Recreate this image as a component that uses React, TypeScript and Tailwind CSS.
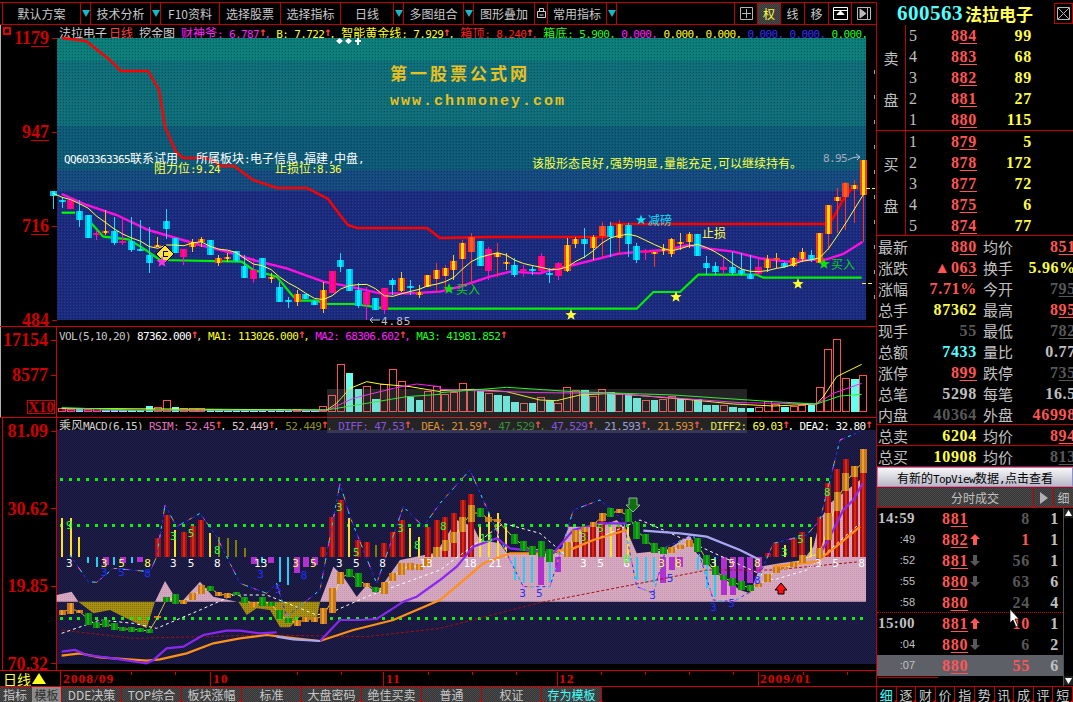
import type { ReactNode } from 'react';

const serif = "font-['Liberation_Serif',serif] font-bold";
const mono = "font-['DejaVu_Sans_Mono',monospace]";
const cjk = "font-['Noto_Sans_CJK_SC',sans-serif]";
const dither = 'bg-[repeating-conic-gradient(#4a4a4a_0_25%,#363636_0_50%)] bg-[length:2px_2px]';

type Pt = [number, number];

// zoom coordinates -> page coordinates
const conv = (list: Pt[], ox: number, oy: number) => list.map(([x, y]): Pt => [ox + x / 3, oy + y / 3]);
const z5 = (list: Pt[]) => conv(list, 0, 180);
const z6 = (list: Pt[]) => conv(list, 440, 180);
const z7 = (list: Pt[]) => conv(list, 0, 420);
const z8 = (list: Pt[]) => conv(list, 440, 420);
const str = (list: Pt[]) => list.map((p) => p.join(',')).join(' ');
const cx = (i: number) => 53.3 + 8.71 * i;

const star = (x: number, y: number, r: number) => {
  const out: string[] = [];
  for (let n = 0; n < 10; n++) {
    const rad = n % 2 === 0 ? r : r * 0.42;
    const a = -Math.PI / 2 + (n * Math.PI) / 5;
    out.push(`${x + rad * Math.cos(a)},${y + rad * Math.sin(a)}`);
  }
  return out.join(' ');
};

// wick top, body top, body bottom, wick bottom, kind (zoom y values, page y = 180 + v / 3)
type Candle = [number, number, number, number, 'c' | 'y' | 'm' | 'r'];
const candles: Candle[] = [
  [33, 33, 47, 88, 'c'], [50, 60, 67, 85, 'c'], [60, 60, 87, 87, 'm'], [60, 93, 120, 140, 'c'], [105, 105, 173, 173, 'c'],
  [150, 160, 165, 180, 'm'], [90, 152, 160, 165, 'y'], [110, 153, 188, 195, 'c'], [110, 183, 186, 195, 'm'], [110, 183, 210, 215, 'c'],
  [120, 207, 212, 212, 'c'], [140, 225, 248, 280, 'c'], [170, 195, 199, 200, 'y'], [88, 123, 148, 178, 'c'], [175, 175, 220, 220, 'c'],
  [207, 207, 232, 255, 'm'], [178, 185, 200, 215, 'y'], [172, 178, 187, 200, 'y'], [180, 180, 225, 225, 'c'], [225, 233, 248, 258, 'y'],
  [220, 232, 236, 245, 'y'], [213, 213, 243, 243, 'c'], [225, 258, 293, 295, 'c'], [235, 270, 297, 310, 'm'], [235, 235, 293, 293, 'c'],
  [280, 290, 295, 310, 'y'], [305, 320, 365, 365, 'c'], [350, 360, 365, 385, 'c'], [330, 342, 365, 378, 'y'], [342, 342, 357, 357, 'c'],
  [360, 363, 375, 375, 'c'], [305, 330, 387, 398, 'y'], [273, 273, 340, 340, 'm'], [220, 240, 262, 275, 'c'], [267, 267, 332, 332, 'c'],
  [310, 330, 378, 385, 'c'], [320, 335, 375, 420, 'm'], [353, 353, 390, 390, 'c'], [324, 324, 390, 403, 'm'], [295, 300, 315, 345, 'c'],
  [275, 295, 333, 335, 'y'], [300, 318, 325, 345, 'c'], [315, 335, 345, 355, 'y'], [285, 285, 322, 322, 'y'], [248, 270, 298, 340, 'y'],
  [255, 263, 288, 330, 'y'], [225, 243, 270, 300, 'y'], [180, 190, 237, 320, 'y'], [158, 172, 215, 310, 'r'], [183, 183, 258, 258, 'c'],
  [200, 207, 272, 300, 'm'], [190, 220, 230, 290, 'y'], [220, 246, 250, 270, 'y'], [235, 256, 285, 290, 'c'], [255, 268, 272, 290, 'm'],
  [255, 268, 272, 285, 'c'], [220, 228, 273, 280, 'm'], [265, 278, 283, 310, 'c'], [245, 250, 287, 300, 'm'], [175, 195, 273, 275, 'y'],
  [170, 178, 193, 205, 'y'], [145, 178, 193, 235, 'c'], [165, 172, 203, 240, 'y'], [125, 138, 168, 230, 'r'], [125, 138, 172, 230, 'c'],
  [120, 133, 173, 225, 'y'], [130, 135, 192, 230, 'c'], [190, 197, 240, 250, 'c'], [207, 210, 220, 240, 'm'], [210, 215, 220, 262, 'y'],
  [192, 208, 213, 225, 'y'], [175, 178, 222, 230, 'y'], [158, 185, 188, 210, 'y'], [155, 162, 187, 205, 'y'], [162, 162, 228, 228, 'c'],
  [228, 250, 263, 285, 'c'], [245, 258, 275, 285, 'c'], [230, 262, 270, 285, 'm'], [215, 262, 278, 285, 'c'], [220, 270, 283, 288, 'c'],
  [225, 283, 296, 296, 'c'], [235, 262, 282, 285, 'm'], [225, 238, 264, 275, 'y'], [220, 235, 240, 265, 'r'], [245, 250, 260, 265, 'c'],
  [230, 234, 258, 262, 'y'], [205, 216, 238, 245, 'y'], [210, 226, 240, 245, 'c'], [160, 160, 250, 250, 'y'], [75, 75, 162, 210, 'y'],
  [25, 52, 62, 160, 'y'], [5, 8, 52, 150, 'r'], [0, 15, 28, 130, 'y'], [-60, -60, 44, 185, 'y'],
];

const vol = [
  0, 3, 2, -3, 2, 3, -2, -2, -2, -2, -2, -6, 4, 11, -5, 3, 3, 3, -3, -3, -2, -2, -2, -2, -2, -2, -3, -2, 2, -2, -2, 5,
  16, 47, -39, -23, 25, -13, 27, 42, 30, -15, -12, 20, 25, 17, 19, 28, 22, -21, 18, -17, -16, -10, 8, -9, 14, -12, 8, 24, 21,
  -22, 15, 22, -20, 17, -17, -14, 11, -12, 12, 15, -14, 12, -13, -7, -7, 6, -5, -4, -4, 4, 10, 7, -5, 5, 6, -7, 24, 62, 72, 33, -33, 36,
];

// macd columns: zoom y of the tip (page y = 420 + v / 3), zero line at 410
const macd: [number, string][] = [
  [295, 'y'], [295, 'y'], [350, 'y'], [430, 'c'], [440, 'c'], [435, 'm'], [435, 'c'], [430, 'm'], [430, 'c'], [425, 'm'], [410, 'c'],
  [355, 'r'], [285, 'r'], [330, 'y'], [335, 'r'], [318, 'r'], [300, 'r'], [338, 'y'], [350, 'o'], [355, 'o'], [360, 'o'], [385, 'o'],
  [432, 'm'], [430, 'c'], [430, 'm'], [485, 'c'], [495, 'c'], [460, 'm'], [440, 'm'], [435, 'm'], [380, 'r'], [290, 'r'], [240, 'r'],
  [293, 'y'], [360, 'r'], [365, 'r'], [375, 'o'], [370, 'r'], [335, 'r'], [300, 'r'], [323, 'y'], [350, 'y'], [320, 'r'], [300, 'r'],
  [290, 'r'], [280, 'r'], [240, 'r'], [222, 'r'], [320, 'y'], [280, 'y'], [280, 'y'], [320, 'y'], [480, 'c'], [490, 'c'], [490, 'c'],
  [495, 'm'], [490, 'c'], [455, 'm'], [370, 'r'], [350, 'r'], [330, 'r'], [320, 'r'], [300, 'r'], [320, 'y'], [320, 'r'], [320, 'y'],
  [480, 'c'], [490, 'c'], [490, 'c'], [490, 'm'], [450, 'm'], [440, 'm'], [410, 'r'], [450, 'c'], [505, 'c'], [530, 'c'], [525, 'm'],
  [525, 'm'], [500, 'm'], [490, 'm'], [460, 'm'], [400, 'r'], [365, 'r'], [375, 'y'], [355, 'r'], [335, 'r'], [350, 'y'], [292, 'r'],
  [190, 'r'], [148, 'r'], [118, 'r'], [155, 'r'], [88, 'r'],
];

const macdCandles: ([number, number, 'o' | 'g'] | null)[] = [
  [570, 585, 'o'], [550, 583, 'o'], [570, 578, 'o'], [580, 615, 'g'], [605, 625, 'g'], [600, 622, 'g'], [610, 630, 'g'], [620, 632, 'g'],
  [620, 637, 'g'], [623, 635, 'g'], [628, 640, 'g'], [588, 594, 'o'], [530, 545, 'g'], [522, 552, 'g'], [540, 552, 'o'], [518, 540, 'o'],
  [495, 522, 'o'], [498, 512, 'g'], [515, 528, 'o'], [518, 535, 'o'], [515, 525, 'g'], [530, 550, 'g'], [545, 560, 'o'], [530, 558, 'g'],
  [545, 557, 'g'], [570, 597, 'g'], [595, 610, 'g'], [600, 617, 'o'], [590, 605, 'o'], [590, 605, 'o'], [563, 612, 'o'], [503, 580, 'o'],
  [457, 492, 'o'], [447, 472, 'g'], [460, 500, 'g'], [490, 500, 'o'], [500, 515, 'g'], [487, 522, 'o'], [460, 482, 'o'], [430, 465, 'o'],
  [428, 450, 'o'], [432, 450, 'o'], [415, 437, 'o'], [380, 410, 'o'], [360, 392, 'o'], [335, 370, 'o'], [290, 335, 'o'], [255, 305, 'o'],
  [265, 292, 'g'], [290, 305, 'o'], [297, 307, 'o'], null, [343, 372, 'g'], [362, 392, 'g'], [378, 405, 'g'], [362, 410, 'g'], [388, 425, 'g'],
  null, [365, 410, 'o'], [330, 365, 'o'], [320, 335, 'o'], [305, 322, 'o'], [280, 302, 'o'], [265, 290, 'g'], [268, 280, 'o'], [268, 305, 'g'],
  [305, 358, 'g'], [342, 372, 'g'], [370, 398, 'g'], [382, 402, 'g'], [382, 398, 'o'], [375, 388, 'o'], [360, 380, 'o'], [355, 395, 'g'],
  [405, 435, 'g'], [438, 465, 'g'], [465, 480, 'g'], [475, 498, 'g'], [482, 510, 'g'], [495, 512, 'g'], [490, 500, 'o'], [462, 487, 'o'],
  [442, 458, 'o'], [440, 448, 'o'], [427, 442, 'o'], [405, 430, 'o'], null, [385, 415, 'o'], [278, 360, 'o'], [215, 273, 'o'], [160, 212, 'o'],
  [138, 170, 'o'], [88, 160, 'o'],
];

const redLine: Pt[] = [
  [62, 38], [86, 41], [110, 60], [121, 71], [148, 71], [159, 90], [165, 127], [176, 152], [183, 158], [207, 158], [221, 166], [234, 166],
  [253, 180], [277, 188], [307, 188], [328, 199], [340, 215], [348, 225], [357, 228], [427, 228], [440, 238], [488, 237], [607, 237], [612, 224],
  [827, 224], [832, 220], [843, 200], [853, 187],
];
const magentaLine: Pt[] = [
  ...z5([[185, 42], [260, 75], [350, 105], [445, 150], [600, 195], [680, 215], [760, 240], [860, 265], [970, 305], [1050, 320], [1140, 340], [1230, 340], [1320, 335]]),
  ...z6([[60, 320], [150, 290], [210, 275], [300, 280], [350, 265], [400, 255], [480, 235], [530, 222], [600, 215], [680, 210], [745, 195], [800, 205], [880, 215], [960, 235], [1040, 245], [1100, 240], [1160, 238], [1210, 222], [1268, 185]]),
];
const greenLine: Pt[] = [
  ...z5([[270, 125], [310, 170], [385, 178], [430, 205], [480, 240], [725, 245], [760, 270], [830, 290], [880, 350], [900, 362], [950, 362], [980, 372], [1060, 372], [1160, 386], [1320, 386]]),
  ...z6([[590, 386], [640, 336], [720, 336], [775, 284], [950, 284], [970, 293], [1265, 293]]),
];
const maLine: Pt[] = candles.map((_, i) => {
  const part = candles.slice(Math.max(0, i - 4), i + 1);
  const avg = part.reduce((s, c) => s + (c[1] + c[2]) / 2, 0) / part.length;
  return [cx(i), 180 + avg / 3];
});

const volYellow = [...z5([[185, 685], [980, 690], [1010, 670], [1050, 625], [1100, 605], [1140, 612], [1230, 620], [1320, 635]]), ...z6([[0, 632], [100, 628], [200, 635], [300, 660], [350, 662], [420, 645], [520, 640], [640, 650], [760, 660], [880, 672], [1000, 678], [1130, 672], [1150, 650], [1190, 590], [1265, 553]])];
const volMagenta = [...z5([[185, 690], [980, 692], [1060, 655], [1180, 625], [1250, 612], [1320, 620]]), ...z6([[0, 628], [100, 632], [300, 638], [500, 640], [650, 650], [900, 668], [1130, 672], [1180, 640], [1265, 610]])];
const volGreen = [...z5([[185, 683], [400, 690], [980, 690], [1100, 670], [1220, 650], [1320, 643]]), ...z6([[0, 638], [200, 622], [400, 635], [700, 645], [1000, 665], [1130, 672], [1200, 648], [1265, 643]])];

const purple1 = z7([[185, 695], [225, 690], [260, 705], [340, 715], [440, 730], [460, 720], [500, 685], [550, 680], [610, 645], [680, 632], [720, 632], [780, 640], [830, 637]]);
const paleBlue1 = z7([[830, 650], [880, 658], [960, 663]]);
const purple2 = [...z7([[960, 663], [1020, 600], [1080, 600], [1130, 597], [1210, 545], [1250, 530], [1320, 480]]), ...z8([[50, 440], [100, 380], [170, 355], [210, 385], [300, 395], [340, 400], [400, 330], [480, 310], [560, 310]])];
const paleBlue2 = z8([[610, 332], [720, 340], [800, 350], [900, 390], [960, 420]]);
const purple3 = z8([[1130, 420], [1180, 330], [1210, 270], [1240, 240], [1268, 190]]);
const orange1 = [...z7([[185, 707], [240, 700], [300, 712], [440, 722], [480, 718], [560, 700], [640, 670], [720, 655], [800, 645], [860, 652], [960, 663], [1060, 630], [1180, 600], [1320, 540]]), ...z8([[60, 490], [130, 430], [210, 400], [300, 400], [400, 385], [460, 360], [560, 330]])];
const orange2 = z8([[1000, 440], [1130, 425], [1200, 370], [1260, 320]]);
const darkRed = [...z7([[185, 630], [400, 655], [800, 645], [1100, 650], [1320, 625]]), ...z8([[300, 548], [600, 490], [800, 450], [1000, 450], [1260, 425]])];
const whiteDash = [...z7([[185, 640], [300, 600], [400, 610], [470, 625], [600, 570], [700, 525], [800, 525], [950, 585], [1010, 570], [1100, 530], [1320, 450]]), ...z8([[190, 310], [300, 340], [370, 400], [600, 300], [670, 330], [1000, 480], [1100, 450], [1260, 310]])];
const osc = [...z7([[210, 405], [265, 485], [290, 487], [340, 445], [450, 455], [470, 410], [495, 255], [530, 320], [600, 280], [650, 350], [720, 490], [800, 520], [830, 490], [860, 590], [960, 510], [1020, 190], [1050, 290], [1130, 490], [1210, 260], [1270, 320], [1320, 250]]), ...z8([[90, 150], [200, 400], [250, 500], [330, 500], [400, 270], [480, 240], [550, 300], [590, 500], [640, 520], [680, 380], [760, 345], [820, 540], [880, 545], [940, 510], [1000, 370], [1100, 345], [1140, 300], [1200, 60], [1260, 35]])];

const pink = [
  z7([[170, 545], [170, 525], [215, 515], [235, 545]]),
  z7([[465, 545], [495, 483], [530, 540], [545, 545], [600, 485], [640, 530], [710, 545]]),
  [...z7([[960, 545], [1000, 440], [1030, 470], [1070, 530], [1100, 495], [1130, 520], [1200, 420], [1300, 400], [1320, 380]]), ...z8([[50, 300], [100, 320], [120, 360], [180, 370], [200, 400], [360, 400], [385, 320], [480, 320], [530, 300], [560, 330], [590, 400], [680, 390], [750, 345], [770, 400], [830, 460], [900, 510], [930, 520], [960, 440], [1020, 430], [1090, 420], [1120, 380], [1140, 300], [1170, 250], [1260, 180], [1278, 180], [1278, 545]])],
];
const olive = [
  z7([[235, 545], [280, 580], [330, 570], [370, 590], [440, 625], [465, 545]]),
  z7([[715, 545], [740, 585], [770, 565], [810, 570], [840, 622], [870, 622], [900, 590], [950, 600], [960, 545]]),
];

// [zoom x, zoom y, text, colour], zoom 7 coordinates
const macdNums: [number, number, string, string][] = [
  [208, 430, '3', '#fff'], [312, 430, '3', '#ffff40'], [365, 430, '5', '#ffff40'], [443, 430, '8', '#ffff40'], [520, 430, '3', '#fff'], [573, 430, '5', '#fff'], [652, 430, '8', '#fff'], [782, 430, '13', '#fff'], [887, 430, '3', '#ffff40'], [940, 430, '5', '#ffff40'], [1018, 430, '3', '#fff'], [1069, 430, '5', '#fff'], [1148, 430, '8', '#fff'], [1278, 430, '13', '#fff'],
  [1410, 430, '18', '#fff'], [1485, 430, '21', '#fff'], [1750, 430, '3', '#fff'], [1802, 430, '5', '#fff'], [1880, 430, '8', '#fff'], [1985, 430, '3', '#ffff40'], [2035, 430, '8', '#ffff40'], [2140, 430, '3', '#ffff40'], [2195, 430, '5', '#ffff40'], [2272, 430, '8', '#ffff40'], [2455, 430, '3', '#fff'], [2507, 430, '5', '#fff'], [2585, 430, '8', '#fff'],
  [208, 315, '9', '#30ff30'], [520, 348, '3', '#30ff30'], [573, 338, '5', '#30ff30'], [652, 390, '8', '#30ff30'], [1018, 262, '3', '#30ff30'], [1069, 395, '5', '#30ff30'], [1202, 325, '3', '#30ff30'], [1252, 375, '8', '#30ff30'], [1330, 317, '8', '#30ff30'], [1458, 355, '13', '#30ff30'], [1750, 350, '3', '#30ff30'], [1802, 323, '5', '#30ff30'], [1880, 417, '8', '#30ff30'], [2353, 397, '3', '#30ff30'], [2402, 357, '5', '#30ff30'], [2482, 215, '8', '#30ff30'],
  [312, 455, '3', '#2030ff'], [365, 455, '5', '#2030ff'], [443, 458, '8', '#2030ff'], [782, 463, '3', '#2030ff'], [835, 508, '5', '#2030ff'], [912, 465, '8', '#2030ff'], [1568, 520, '3', '#2030ff'], [1618, 518, '5', '#2030ff'], [1958, 526, '3', '#2030ff'], [2010, 473, '5', '#2030ff'], [2140, 560, '3', '#2030ff'], [2195, 548, '5', '#2030ff'], [2272, 480, '8', '#2030ff'],
];

function Price({ v, className = '' }: { v: string; className?: string }) {
  return (
    <span className={className}>
      {v.slice(0, -2)}
      <u className="underline-offset-2">{v.slice(-2)}</u>
    </span>
  );
}

// ascii in a 6px cell, chinese in a 12px cell, as on the old terminal
function Mixed({ text, color }: { text: string; color: string }) {
  return (
    <span style={{ color }}>
      {text.split(/([\u4e00-\u9fff]+)/).map((part, i) =>
        i % 2 === 1 ? (
          <span key={i} className={`${cjk} text-[12px]`}>{part}</span>
        ) : (
          <span key={i} className={`${mono} text-[11px] tracking-[-0.62px]`}>{part}</span>
        )
      )}
    </span>
  );
}

function Legend({ items, className = '' }: { items: [string, string][]; className?: string }) {
  return (
    <div className={`flex items-center whitespace-pre pl-[2px] leading-none ${className}`}>
      {items.map(([t, c], i) =>
        t === '|' ? (
          <span key={i} className="w-[2px]" />
        ) : t === '↑' ? (
          <span key={i} className={`${mono} w-[5px] text-[12px] font-bold leading-none text-[#ff4040]`}>↑</span>
        ) : (
          <Mixed key={i} text={t} color={c} />
        )
      )}
    </div>
  );
}

function ChartText({ x, y, text, fill }: { x: number; y: number; text: string; fill: string }) {
  return (
    <text x={x} y={y} fill={fill}>
      {text.split(/([\u4e00-\u9fff\uff0c\u3002]+)/).map((part, i) =>
        i % 2 === 1 ? (
          <tspan key={i} className={cjk} fontSize="12">{part}</tspan>
        ) : (
          <tspan key={i} className={mono} fontSize="11" letterSpacing="-0.62">{part}</tspan>
        )
      )}
    </text>
  );
}

function AxisLabel({ children, tick = true }: { children: ReactNode; tick?: boolean }) {
  return (
    <div className={`flex h-[12px] items-center justify-end gap-[3px] text-[18px] leading-[12px] text-[#d00000] ${serif}`}>
      <span>{children}</span>
      {tick ? <span className="h-px w-[5px] bg-[#d00000]" /> : <span className="w-[5px]" />}
    </div>
  );
}

function DropArrow() {
  return (
    <span className="ml-auto flex h-full w-[10px] items-center justify-end border-l border-[#c00000]">
      <svg width="8" height="7" viewBox="0 0 8 7"><polygon points="0,0 8,0 4,7" fill="#18b8c8" /></svg>
    </span>
  );
}

const menu: [string, string, boolean][] = [
  ['默认方案', 'w-[88px]', true],
  ['技术分析', 'w-[70px]', true],
  ['F10资料', 'w-[59px]', false],
  ['选择股票', 'w-[61px]', false],
  ['选择指标', 'w-[60px]', false],
  ['日线', 'w-[63px]', true],
  ['多图组合', 'w-[70px]', true],
  ['图形叠加', 'w-[61px]', false],
];

function TopBar() {
  return (
    <div className="flex h-[25px] bg-black pt-[2px]">
      <div className={`flex h-[23px] w-[876px] items-center border-y border-[#c00000] pl-[2px] text-[12px] text-[#c8c8c8] ${cjk}`}>
        {menu.map(([label, w, drop]) => (
          <div key={label} className={`flex h-full items-center border-l border-[#c00000] ${w}`}>
            <span className="flex-1 text-center">{label}</span>
            {drop && <DropArrow />}
          </div>
        ))}
        <div className="flex h-full w-[13px] items-center justify-center border-l border-[#c00000]">
          <svg width="9" height="13" viewBox="0 0 9 13" fill="none" stroke="#d0d0d0">
            <path d="M2.5 4V1.5h4V4M.5 4.5h8v6h-8zM2.5 8h4" />
          </svg>
        </div>
        <div className="flex h-full w-[69px] items-center border-l border-[#c00000]">
          <span className="flex-1 text-center">常用指标</span>
          <DropArrow />
        </div>
        <div className="h-full w-[119px] border-x border-[#c00000]" />
        <div className="flex h-full w-[23px] items-center justify-center border-r border-[#c00000]">
          <svg width="13" height="13" viewBox="0 0 13 13" fill="none" stroke="#b8b8b8"><path d="M.5.5h12v12H.5zM6.5 2v9M2 6.5h9" /></svg>
        </div>
        <div className={`flex h-full w-[23px] items-center justify-center border-r border-[#c00000] text-[#ffff40] ${dither}`}>权</div>
        <div className="flex h-full w-[24px] items-center justify-center border-r border-[#c00000]">线</div>
        <div className="flex h-full w-[24px] items-center justify-center border-r border-[#c00000]">移</div>
        <div className="flex h-full w-[23px] items-center justify-center border-r border-[#c00000]">
          <svg width="15" height="13" viewBox="0 0 15 13" fill="none" stroke="#fff"><path d="M.5.5h14v12H.5zM.5 3.5h14" /><polygon points="7.5,4 11,7.5 4,7.5" fill="#fff" /></svg>
        </div>
        <div className="flex h-full flex-1 items-center justify-center">
          <svg width="14" height="13" viewBox="0 0 14 13" fill="none" stroke="#b8b8b8"><path d="M.5.5h13v12H.5zM10.5.5v12" /><polygon points="3,2 9,6.5 3,11" fill="#b8b8b8" /></svg>
        </div>
      </div>
      <div className="flex h-[23px] flex-1 items-center border-l border-[#c00000] pl-[20px]">
        <span className={`text-[21px] leading-none tracking-[0.5px] text-[#55ffff] ${serif}`}>600563</span>
        <span className={`ml-[2px] text-[17px] font-bold leading-none text-[#ffff55] ${cjk}`}>法拉电子</span>
        <span className="ml-auto flex h-[21px] w-[19px] items-center justify-center border border-[#c00000]">
          <svg width="13" height="13" viewBox="0 0 13 13" fill="none" stroke="#b8b8b8"><path d="M.5.5h12v12H.5zM1 1l11 11M12 1 1 12" /></svg>
        </span>
      </div>
    </div>
  );
}

function MainChart() {
  return (
    <svg viewBox="57 38 819 288" className="block h-[288px] w-[819px] overflow-visible" shapeRendering="crispEdges">
      <defs>
        <pattern id="dots" width="3" height="3" patternUnits="userSpaceOnUse">
          <rect width="1" height="1" fill="#000" opacity="0.25" />
          <rect x="1" y="2" width="1" height="1" fill="#fff" opacity="0.07" />
        </pattern>
      </defs>
      <rect x="57" y="38" width="809" height="23" fill="#0b7d78" />
      <rect x="57" y="61" width="809" height="65" fill="#0d6d78" />
      <rect x="57" y="126" width="809" height="44" fill="#0c5a78" />
      <rect x="57" y="170" width="809" height="21" fill="#144a80" />
      <rect x="57" y="191" width="809" height="129" fill="#1b2b80" />
      <rect x="57" y="38" width="809" height="282" fill="url(#dots)" />
      <g shapeRendering="geometricPrecision">
        <polyline points={str(redLine)} fill="none" stroke="#ff0000" strokeWidth="2.4" />
        <polyline points={str(z5([[185, 98], [225, 98]]))} fill="none" stroke="#00ff00" strokeWidth="2.2" />
        <polyline points={str(greenLine)} fill="none" stroke="#00f000" strokeWidth="2.2" />
        <polyline points={str(magentaLine)} fill="none" stroke="#ff10e0" strokeWidth="2.4" />
      </g>
      {candles.map(([wt, bt, bb, wb, k], i) => {
        const x = cx(i);
        const long = wb - bb > 40 && k !== 'c';
        const wick = k === 'c' ? '#20d8f0' : k === 'm' ? '#ff10c0' : long ? '#ff3020' : '#ffc020';
        const outer = k === 'c' ? '#00b8f0' : k === 'm' ? '#ff1040' : '#ff3820';
        const inner = k === 'c' ? '#00f0ff' : k === 'm' ? '#ff00d0' : k === 'y' ? '#ffe000' : '#f06020';
        const top = 180 + bt / 3;
        const h = Math.max(2, (bb - bt) / 3);
        return (
          <g key={i}>
            <line x1={x} x2={x} y1={180 + wt / 3} y2={180 + wb / 3} stroke={wick} />
            <rect x={x - 3.5} y={top} width={7} height={h} fill={outer} />
            <rect x={x - 1.5} y={top} width={3} height={h} fill={inner} />
          </g>
        );
      })}
      <polyline points={str(maLine)} fill="none" stroke="#ffff40" strokeWidth="1" shapeRendering="geometricPrecision" />

      <polygon points="165,245 174,254 165,263 156,254" fill="#ffe040" stroke="#000" />
      <path d="M168 251.5h-5v5h5" fill="none" stroke="#000" />
      <g shapeRendering="geometricPrecision">
        <polygon points={star(162, 262, 6)} fill="#ff30e0" />
        <polygon points={star(449, 289, 6)} fill="#10e010" />
        <polygon points={star(824, 264, 6)} fill="#10e010" />
        <polygon points={star(571, 315, 6)} fill="#ffff30" />
        <polygon points={star(676, 297, 6)} fill="#ffff30" />
        <polygon points={star(798, 284, 6)} fill="#ffff30" />
        <polygon points={star(641, 220, 5.5)} fill="#10e0f0" />
        <polygon points="336,41 339.5,38 343,41 339.5,44" fill="#fff" />
        <polygon points="345,41 348.5,38 352,41 348.5,44" fill="#fff" />
        <path d="M358 38v7M355 41h6" stroke="#fff" strokeWidth="2" />
      </g>
      <g shapeRendering="auto">
        <text x={390} y={80} fontSize="17" fontWeight="700" fill="#e8c020" className={cjk} letterSpacing="3">第一股票公式网</text>
        <text x={390} y={105} fontSize="15" fontWeight="700" fill="#e8c020" className="font-['Liberation_Mono',monospace]" letterSpacing="2">www.chnmoney.com</text>
        <ChartText x={64} y={163} text="QQ603363365联系试用" fill="#fff" />
        <ChartText x={196} y={163} text="所属板块:电子信息,福建,中盘," fill="#fff" />
        <ChartText x={154} y={173} text="阻力位:9.24" fill="#ffff40" />
        <ChartText x={275} y={173} text="止损位:8.36" fill="#ffff40" />
        <ChartText x={532} y={168} text="该股形态良好,强势明显,量能充足,可以继续持有。" fill="#ffff40" />
        <ChartText x={823} y={162} text="8.95" fill="#a8a8c0" />
        <path d="M848 160c3-2 7-3 11-3M856 154l4 3-3 3" fill="none" stroke="#c0c0d0" />
        <ChartText x={648} y={225} text="减磅" fill="#10e0f0" />
        <ChartText x={702} y={238} text="止损" fill="#ffff40" />
        <ChartText x={456} y={294} text="买入" fill="#10d010" />
        <ChartText x={831} y={269} text="买入" fill="#10d010" />
        <path d="M370 320h10M373 317l-3 3 3 3" fill="none" stroke="#c0c0d0" />
        <text x={381} y={325} fontSize="11" fill="#c0c0d0" className={mono} letterSpacing="1">4.85</text>
      </g>
      <path d="M866 188h9M862 283h12" stroke="#ffff40" strokeDasharray="4 2" />
      <path d="M874 70v4M874 95v4M874 120v4M874 145v4M874 170v4M874 195v4M874 220v4M874 245v4M874 270v4M874 295v4" stroke="#a0a0a0" />
    </svg>
  );
}

function VolChart() {
  return (
    <svg viewBox="57 340 819 77" className="block h-[77px] w-[819px] overflow-visible" shapeRendering="crispEdges">
      {vol.map((v, i) => {
        if (v === 0) return null;
        const h = Math.abs(v);
        const y = 411.5 - h;
        return v > 0 ? (
          <rect key={i} x={cx(i) - 3.5} y={y} width={7} height={h} fill="none" stroke="#ff5050" />
        ) : (
          <rect key={i} x={cx(i) - 3.5} y={y} width={7.5} height={h + 0.5} fill="#66ffee" />
        );
      })}
      <g fill="none" strokeWidth="1" shapeRendering="geometricPrecision">
        <polyline points={str(volYellow)} stroke="#ffff20" />
        <polyline points={str(volMagenta)} stroke="#ff20ff" />
        <polyline points={str(volGreen)} stroke="#20ff20" />
      </g>
    </svg>
  );
}

function MacdChart() {
  const barColor: Record<string, string> = { r: '#a81010', y: '#ffe020', o: '#808000', c: '#20d0f8', m: '#b030d0' };
  const centers = macdCandles
    .map((c, i): Pt | null => (c ? [cx(i + 1), 420 + (c[0] + c[1]) / 6] : null))
    .filter((p): p is Pt => p !== null);
  return (
    <svg viewBox="57 430 819 240" className="block h-[240px] w-[819px] overflow-visible" shapeRendering="crispEdges">
      <defs>
        <pattern id="navy" width="2" height="2" patternUnits="userSpaceOnUse">
          <rect width="2" height="2" fill="#20204a" />
          <rect width="1" height="1" fill="#14143a" />
          <rect x="1" y="1" width="1" height="1" fill="#14143a" />
        </pattern>
        <pattern id="rose" width="2" height="2" patternUnits="userSpaceOnUse">
          <rect width="2" height="2" fill="#d8a8c0" />
          <rect width="1" height="1" fill="#c098b0" />
        </pattern>
        <pattern id="mud" width="2" height="2" patternUnits="userSpaceOnUse">
          <rect width="2" height="2" fill="#a89010" />
          <rect width="1" height="1" fill="#807010" />
        </pattern>
      </defs>
      <rect x="57" y="430" width="819" height="234" fill="url(#navy)" />
      {pink.map((p, i) => (
        <polygon key={i} points={str(p)} fill="url(#rose)" shapeRendering="geometricPrecision" />
      ))}
      {olive.map((p, i) => (
        <polygon key={i} points={str(p)} fill="url(#mud)" shapeRendering="geometricPrecision" />
      ))}
      <path d="M60 479H866M60 525H866M60 618H866" stroke="#10f010" strokeWidth="3" strokeDasharray="3 5.7" />
      {macd.map(([tip, k], i) => {
        const x = cx(i + 1);
        const y1 = 420 + Math.min(tip, 410) / 3;
        const y2 = 420 + Math.max(tip, 410) / 3;
        const wide = k === 'r' || k === 'm';
        return (
          <g key={i}>
            <rect x={x - (wide ? 3 : 1)} y={y1} width={wide ? 6 : 2} height={y2 - y1} fill={barColor[k]} />
            {k === 'r' && <rect x={x - 1} y={y1} width={2} height={y2 - y1} fill="#d82818" />}
          </g>
        );
      })}
      <g fill="none" shapeRendering="geometricPrecision">
        <polyline points={str(darkRed)} stroke="#a01010" strokeDasharray="3 2" />
        <polyline points={str(whiteDash)} stroke="#fff" strokeDasharray="3 3" />
        <polyline points={str(osc)} stroke="#2030ff" strokeDasharray="3 3" />
        <polyline points={str(osc)} stroke="#20e0f0" strokeDasharray="3 15" />
        <polyline points={str(osc)} stroke="#ff9020" strokeDasharray="3 21" strokeDashoffset="9" />
        <polyline points={str(osc)} stroke="#ff30ff" strokeDasharray="3 27" strokeDashoffset="15" />
        <polyline points={str(centers)} stroke="#ffff30" opacity="0.75" />
        <polyline points={str(orange1)} stroke="#ff9018" strokeWidth="2.2" />
        <polyline points={str(orange2)} stroke="#ff9018" strokeWidth="2.2" />
        <polyline points={str(purple1)} stroke="#8a28f0" strokeWidth="2.2" />
        <polyline points={str(purple2)} stroke="#8a28f0" strokeWidth="2.2" />
        <polyline points={str(purple3)} stroke="#8a28f0" strokeWidth="2.2" />
        <polyline points={str(paleBlue1)} stroke="#a8a8f0" strokeWidth="2.2" />
        <polyline points={str(paleBlue2)} stroke="#a8a8f0" strokeWidth="2.2" />
      </g>
      {macdCandles.map((c, i) => {
        if (!c) return null;
        const [t, b, k] = c;
        const x = cx(i + 1);
        return (
          <g key={i}>
            <rect x={x - 3.5} y={420 + t / 3} width={7} height={(b - t) / 3} fill={k === 'o' ? '#c87818' : '#0e8a10'} />
            <rect x={x - 1} y={420 + t / 3} width={2} height={(b - t) / 3} fill={k === 'o' ? '#e8a030' : '#18b018'} />
          </g>
        );
      })}
      <g shapeRendering="auto">
        {macdNums.map(([x, y, t, c], i) => (
          <text key={i} x={x / 3} y={420 + y / 3 + 4} fontSize="11" textAnchor="middle" fill={c} className={mono}>{t}</text>
        ))}
      </g>
      <polygon points="629,498 637,498 637,505 640,505 633,512 626,505 629,505" fill="#107010" stroke="#90b090" shapeRendering="geometricPrecision" />
      <polygon points="781,583 787,590 784,590 784,594 778,594 778,590 775,590" fill="#ff1010" stroke="#000" shapeRendering="geometricPrecision" />
    </svg>
  );
}

const bottomTabs: [string, string][] = [
  ['DDE决策', '#c8c8c8'], ['TOP综合', '#c8c8c8'], ['板块涨幅', '#c8c8c8'], ['标准', '#c8c8c8'], ['大盘密码', '#c8c8c8'],
  ['绝佳买卖', '#c8c8c8'], ['普通', '#c8c8c8'], ['权证', '#c8c8c8'], ['存为模板', '#40ffff'],
];

function Notch() {
  return <span className="absolute -bottom-px -right-[3px] h-0 w-0 border-x-[3px] border-b-[3px] border-x-transparent border-b-[#e00000]" />;
}

function LeftColumn() {
  return (
    <div className="relative flex w-[876px] flex-col">
      <div className="flex h-[301px]">
        <div className="flex w-[57px] flex-col justify-between border-l border-[#b0b0b0] pt-[7px]">
          <AxisLabel><Price v="1179" /></AxisLabel>
          <AxisLabel><Price v="947" /></AxisLabel>
          <AxisLabel><Price v="716" /></AxisLabel>
          <AxisLabel>484</AxisLabel>
        </div>
        <div className="w-[819px]">
          <Legend
            className="h-[13px]"
            items={[
              ['法拉电子', '#d0d0d0'], ['|', ''], ['日线', '#ff4040'], [' ', '#000'], ['挖金图', '#d0d0d0'], [' ', '#000'],
              ['财神爷: 6.787', '#ff20ff'], ['↑', ''], [', ', '#ff20ff'], ['B: 7.722', '#ffff20'], ['↑', ''], [', ', '#ffff20'],
              ['智能黄金线: 7.929', '#ffff20'], ['↑', ''], [', ', '#ffff20'], ['箱顶: 8.240', '#ff2020'], ['↑', ''], [', ', '#ff2020'],
              ['箱底: 5.900, ', '#20ff20'], ['0.000, ', '#ff20ff'], ['0.000, ', '#ffff20'], ['0.000, ', '#ffff20'], ['0.000, ', '#3030ff'], ['0.000, ', '#3030ff'], ['0.000,', '#20ff20'],
            ]}
          />
          <MainChart />
        </div>
        <svg className="absolute left-[2px] top-[1px]" width="10" height="10" viewBox="0 0 10 10">
          <path d="M1 1h8v8H1z" fill="#e00000" /><path d="M3 3h4v4H3z" fill="#000" />
        </svg>
      </div>

      <div className="flex h-[91px] border-t border-[#d00000]">
        <div className="flex w-[57px] flex-col border-x border-[#d00000] border-l-[#b0b0b0] pt-[7px]">
          <AxisLabel>17154</AxisLabel>
          <div className="mt-[23px]"><AxisLabel>8577</AxisLabel></div>
          <div className={`ml-[26px] mt-[19px] h-[14px] w-[28px] border border-[#d00000] text-center text-[15px] leading-[12px] text-[#d00000] ${serif}`}>X10</div>
        </div>
        <div className="w-[819px]">
          <Legend
            className="h-[13px]"
            items={[
              ['VOL(5,10,20) ', '#c8c8c8'], ['87362.000', '#ffffff'], ['↑', ''], [', ', '#c8c8c8'],
              ['MA1: 113026.000', '#ffff20'], ['↑', ''], [', ', '#ffff20'], ['MA2: 68306.602', '#ff20ff'], ['↑', ''], [', ', '#ff20ff'],
              ['MA3: 41981.852', '#20ff20'], ['↑', ''],
            ]}
          />
          <VolChart />
        </div>
      </div>

      <div className="flex h-[253px] border-t border-[#d00000]">
        <div className="ml-[2px] flex w-[55px] flex-col justify-between border-x border-[#d00000] pt-[7px]">
          <AxisLabel>81.09</AxisLabel>
          <AxisLabel>30.62</AxisLabel>
          <AxisLabel>19.85</AxisLabel>
          <AxisLabel>70.32</AxisLabel>
        </div>
        <div className="w-[819px]">
          <Legend
            className="h-[12px]"
            items={[
              ['乘风MACD(6,15) ', '#d0d0d0'], ['RSIM: ', '#e070c0'], ['52.45', '#e070c0'], ['↑', ''], [', ', '#e0e0e0'], ['52.449', '#e0c0d0'], ['↑', ''], [', ', '#e0e0e0'],
              ['52.449', '#909020'], ['↑', ''], [', ', '#909020'], ['DIFF: 47.53', '#8040ff'], ['↑', ''], [', ', '#8040ff'], ['DEA: 21.59', '#f09020'], ['↑', ''], [', ', '#f09020'],
              ['47.529', '#209020'], ['↑', ''], [', ', '#209020'], ['47.529', '#8040ff'], ['↑', ''], [', ', '#8040ff'], ['21.593', '#a0a0f0'], ['↑', ''], [', ', '#a0a0f0'],
              ['21.593', '#f09020'], ['↑', ''], [', ', '#f09020'], ['DIFF2: ', '#ffff40'], ['69.03', '#ffff40'], ['↑', ''], [', ', '#ffffff'], ['DEA2: 32.80', '#ffffff'], ['↑', ''],
            ]}
          />
          <MacdChart />
        </div>
      </div>

      <div className="flex h-[16px] items-center border-t border-[#d00000]">
        <div className={`flex h-full w-[61px] items-center gap-[1px] border-r border-[#d00000] pl-[3px] text-[14px] leading-none text-[#ffff40] ${cjk}`}>
          日线
          <svg width="14" height="11" viewBox="0 0 14 11"><polygon points="7,0 14,11 0,11" fill="#ffff20" /></svg>
        </div>
        <svg viewBox="61 670 815 15" className="block h-[15px] w-[815px]" shapeRendering="crispEdges">
          <path d="M131 671v3M175 671v3M297 671v3M341 671v3M428 671v3M472 671v3M516 671v3M601 671v3M645 671v3M689 671v3M733 671v3M803 671v3M847 671v3M210 671v15M383 671v15M557 671v15M758 671v15" stroke="#d00000" />
          <g shapeRendering="auto" fill="#e00000" fontSize="13.5" className={serif} letterSpacing="1">
            <text x="63" y="682">2008/09</text>
            <text x="213" y="682">10</text>
            <text x="386" y="682">11</text>
            <text x="559" y="682">12</text>
            <text x="760" y="682">2009/01</text>
          </g>
        </svg>
      </div>

      <div className={`flex h-[16px] items-center border-t border-[#d00000] text-[12px] text-[#c8c8c8] ${cjk} ${dither}`}>
        <div className="w-[32px] pl-[3px]">指标</div>
        <div className="flex h-full w-[29px] items-center justify-center bg-[#8c8c8c] text-[#303030]">模板</div>
        {bottomTabs.map(([t, c]) => (
          <div key={t} className="relative flex h-full w-[60px] items-center justify-center border-l border-[#c00000]" style={{ color: c }}>
            {t}
            <Notch />
          </div>
        ))}
        <div className="h-full flex-1 border-l border-[#c00000] bg-black" />
      </div>

      <div className="absolute left-[327px] top-[364px] h-[44px] w-[420px] bg-[#909090]/25" />
    </div>
  );
}

const num = `${serif} text-[16px] tracking-[0.7px] leading-[21px]`;
const RED = 'text-[#ff5555]';
const YEL = 'text-[#ffff44]';
const GRY = 'text-[#c0c0c0]';
const DIM = 'text-[#585858]';

function Book({ side, rows, h }: { side: string; rows: [string, string, string][]; h: string }) {
  return (
    <div className={`flex border-b border-[#c00000] ${h}`}>
      <div className={`flex w-[29px] flex-col items-center justify-center gap-[20px] border-r border-[#c00000] pt-[3px] text-[15px] leading-[22px] text-[#c0c0c0] ${cjk}`}>
        <span>{side}</span>
        <span>盘</span>
      </div>
      <div className="flex-1">
        {rows.map(([n, p, q]) => (
          <div key={n} className={`flex h-[21px] ${num}`}>
            <span className={`w-[12px] pl-[3px] font-normal ${GRY}`}>{n}</span>
            <span className={`w-[59px] text-right ${RED}`}><Price v={p} /></span>
            <span className={`w-[55px] text-right ${YEL}`}>{q}</span>
          </div>
        ))}
      </div>
    </div>
  );
}

const stats: [string, ReactNode, string, ReactNode][] = [
  ['最新', <Price v="880" className={RED} />, '均价', <Price v="851" className={RED} />],
  ['涨跌', <span className={RED}>▲<Price v="063" /></span>, '换手', <span className={YEL}>5.96%</span>],
  ['涨幅', <span className={RED}>7.71%</span>, '今开', <Price v="795" className={DIM} />],
  ['总手', <span className={YEL}>87362</span>, '最高', <Price v="895" className={RED} />],
  ['现手', <span className={DIM}>55</span>, '最低', <Price v="782" className={DIM} />],
  ['总额', <span className="text-[#55ffff]">7433</span>, '量比', <span className={GRY}>0.77</span>],
  ['涨停', <Price v="899" className={RED} />, '跌停', <Price v="735" className={DIM} />],
  ['总笔', <span className={GRY}>5298</span>, '每笔', <span className={GRY}>16.5</span>],
  ['内盘', <span className={DIM}>40364</span>, '外盘', <span className={RED}>46998</span>],
];

function StatRow({ row, h = 'h-[21px]' }: { row: [string, ReactNode, string, ReactNode]; h?: string }) {
  return (
    <div className={`flex w-[200px] items-center whitespace-nowrap ${h}`}>
      <span className={`ml-px w-[31px] shrink-0 text-[15px] leading-[21px] text-[#c0c0c0] ${cjk}`}>{row[0]}</span>
      <span className={`w-[68px] shrink-0 text-right ${num}`}>{row[1]}</span>
      <span className={`ml-[6px] w-[31px] shrink-0 text-[15px] leading-[21px] text-[#c0c0c0] ${cjk}`}>{row[2]}</span>
      <span className={`w-[62px] shrink-0 text-right ${num}`}>{row[3]}</span>
    </div>
  );
}

const ticks: [string, string, string, string, string, boolean][] = [
  ['14:59', '881', '', '8', '1', true],
  [':49', '882', 'up', '1', '1', false],
  [':52', '881', 'down', '56', '1', false],
  [':55', '880', 'down', '63', '6', false],
  [':58', '880', '', '24', '4', false],
  ['15:00', '881', 'up', '10', '1', true],
  [':04', '880', 'down', '6', '2', false],
  [':07', '880', '', '55', '6', false],
];

function TickArrow({ dir }: { dir: string }) {
  if (!dir) return null;
  return (
    <svg width="10" height="11" viewBox="0 0 10 11" className="ml-[2px]">
      {dir === 'up' ? (
        <polygon points="5,0 10,5 7,5 7,11 3,11 3,5 0,5" fill="#ff5555" />
      ) : (
        <polygon points="5,11 10,6 7,6 7,0 3,0 3,6 0,6" fill="#585858" />
      )}
    </svg>
  );
}

function TickList() {
  return (
    <div className="relative flex h-[178px]">
      <div className="flex-1">
        {ticks.map(([t, p, dir, v, n, big], i) => (
          <div
            key={i}
            className={`flex h-[21px] items-center ${i === 4 ? 'border-b border-dotted border-[#c00000]' : ''} ${i === 7 ? 'bg-[#5e6068]' : ''}`}
          >
            <span className={`w-[38px] text-right leading-none ${GRY} ${big ? `${serif} text-[15px] tracking-[0.4px]` : "font-['Liberation_Sans',sans-serif] text-[11px]"}`}>{t}</span>
            <span className={`ml-[27px] flex w-[39px] items-center ${num} ${RED}`}>
              <Price v={p} />
              <TickArrow dir={dir} />
            </span>
            <span className={`w-[49px] text-right ${num} ${v === '1' || v === '10' || v === '55' ? RED : DIM}`}>{v}</span>
            <span className={`w-[29px] text-right ${num} ${GRY}`}>{n}</span>
          </div>
        ))}
        <div className="ml-px mt-[1px] h-px w-[60px] bg-[#c00000]" />
      </div>
      <div className="flex w-[10px] flex-col justify-between border-l border-[#505050] py-[1px]">
        <svg width="9" height="9" viewBox="0 0 9 9"><rect width="9" height="9" fill="#202020" /><polygon points="4.5,1 8,7 1,7" fill="#fff" /></svg>
        <svg width="9" height="9" viewBox="0 0 9 9"><rect width="9" height="9" fill="#202020" /><polygon points="4.5,8 8,2 1,2" fill="#fff" /></svg>
      </div>
      <svg className="absolute left-[132px] top-[101px]" width="11" height="20" viewBox="0 0 11 20">
        <polygon points="1,0 1,14 4,11 7,18 9,17 6,10 10,10" fill="#fff" stroke="#000" strokeWidth="0.7" />
      </svg>
    </div>
  );
}

function RightColumn() {
  return (
    <div className="flex w-[197px] flex-col overflow-hidden border-l border-[#c00000]">
      <Book
        side="卖"
        h="h-[106px]"
        rows={[['5', '884', '99'], ['4', '883', '68'], ['3', '882', '89'], ['2', '881', '27'], ['1', '880', '115']]}
      />
      <Book
        side="买"
        h="h-[105px]"
        rows={[['1', '879', '5'], ['2', '878', '172'], ['3', '877', '72'], ['4', '875', '6'], ['5', '874', '77']]}
      />
      <div className="h-[189px] border-b border-[#c00000]">
        {stats.map((row) => (
          <StatRow key={row[0]} row={row} />
        ))}
      </div>
      <div className="border-b border-[#c00000]">
        <StatRow row={['总卖', <span className={YEL}>6204</span>, '均价', <Price v="894" className={RED} />]} h="h-[20px]" />
      </div>
      <div className="border-b border-[#c00000]">
        <StatRow row={['总买', <span className={YEL}>10908</span>, '均价', <Price v="813" className={DIM} />]} h="h-[20px]" />
      </div>
      <div className="flex h-[20px] items-center justify-center border border-[#8890d0] bg-gradient-to-b from-[#f8f8f8] to-[#b8b8c8] leading-none">
        <Mixed text="有新的TopView数据,点击查看" color="#000" />
      </div>
      <div className={`flex h-[21px] items-center border-y border-[#c00000] text-[12px] text-[#c0c0c0] ${cjk} ${dither}`}>
        <span className="flex-1 pl-[40px] text-center">分时成交</span>
        <span className="flex h-full w-[20px] items-center justify-center border-l border-[#c00000]">
          <svg width="8" height="12" viewBox="0 0 8 12"><polygon points="0,0 8,6 0,12" fill="#b0b0b0" /></svg>
        </span>
        <span className="flex h-full w-[20px] items-center justify-center border-l border-[#c00000]">细</span>
      </div>
      <TickList />
      <div className={`flex h-[16px] border-t border-[#c00000] text-[13px] leading-none text-[#c8c8c8] ${cjk}`}>
        {['细', '逐', '财', '价', '指', '势', '讯', '成', '评', '短'].map((t, i) => (
          <span key={t} className={`relative flex w-[20px] items-center justify-center border-r border-[#c00000] ${i === 0 ? 'text-[#40ffff]' : ''}`}>
            {t}
            <Notch />
          </span>
        ))}
      </div>
    </div>
  );
}

export default function App() {
  return (
    <div className="h-[702px] w-[1073px] overflow-hidden bg-black">
      <TopBar />
      <div className="flex h-[677px]">
        <LeftColumn />
        <RightColumn />
      </div>
    </div>
  );
}
